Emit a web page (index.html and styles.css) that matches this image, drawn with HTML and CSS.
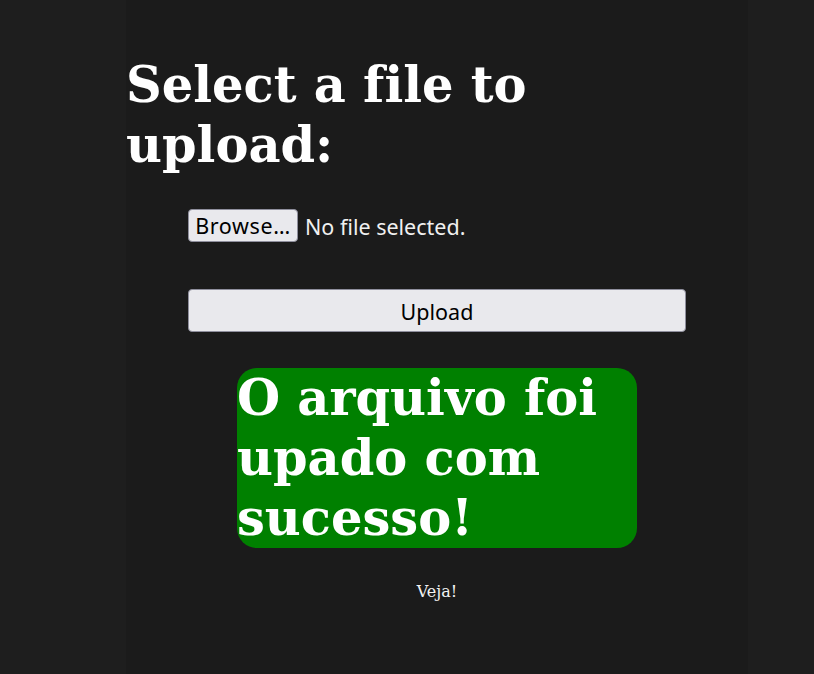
FILE: index.html
```html
<!DOCTYPE html>
<html>
<head>
<meta charset="utf-8">
<title>Upload</title>
<link rel="stylesheet" href="styles.css">
</head>
<body>
<main class="page">
  <h1 class="title">Select a file to upload:</h1>
  <form class="form">
    <div class="file-row">
      <span class="browse">Browse…</span>
      <span class="file-name">No file selected.</span>
    </div>
    <button type="button" class="upload">Upload</button>
  </form>
  <div class="message">O arquivo foi upado com sucesso!</div>
  <p class="veja">Veja!</p>
</main>
</body>
</html>
```

FILE: styles.css
```css
html, body {
  margin: 0;
  padding: 0;
  background: #1e1e1e;
}

.page {
  margin-left: 126px;
  width: 622px;
  min-height: 674px;
  box-sizing: border-box;
  background: #1b1b1b;
  padding-top: 55px;
  display: flex;
  flex-direction: column;
}

.title {
  margin: 0;
  width: 480px;
  font-family: "DejaVu Serif", serif;
  font-weight: bold;
  font-size: 49.5px;
  line-height: 60px;
  font-variant-ligatures: none;
  color: #ffffff;
}

.form {
  margin: 34px 62px 0 62px;
  display: flex;
  flex-direction: column;
}

.file-row {
  display: flex;
  align-items: center;
  gap: 7px;
  font-family: "Noto Sans", sans-serif;
  font-size: 21.5px;
}

.browse {
  box-sizing: border-box;
  width: 110px;
  height: 33px;
  padding: 0;
  display: flex;
  align-items: center;
  justify-content: center;
  letter-spacing: 0.6px;
  background: #e9e9ed;
  border: 1px solid #8f8f9d;
  border-radius: 4px;
  color: #000;
}

.file-name {
  color: #f0f0f0;
  padding-top: 2px;
}

.upload {
  margin-top: 47px;
  height: 43px;
  width: 498px;
  background: #e9e9ed;
  border: 1px solid #8f8f9d;
  border-radius: 4px;
  font-family: "Noto Sans", sans-serif;
  font-size: 21.5px;
  color: #000;
  padding: 2px 0 0 0;
}

.message {
  margin: 36px auto 0 auto;
  width: 400px;
  height: 180px;
  background: #008000;
  border-radius: 20px;
  font-family: "DejaVu Serif", serif;
  font-weight: bold;
  font-size: 49.5px;
  line-height: 60px;
  font-variant-ligatures: none;
  color: #ffffff;
}

.veja {
  margin: 34px 0 0 0;
  text-align: center;
  font-family: "DejaVu Serif", serif;
  font-size: 16px;
  line-height: 20px;
  color: #f2f2f2;
}
```
